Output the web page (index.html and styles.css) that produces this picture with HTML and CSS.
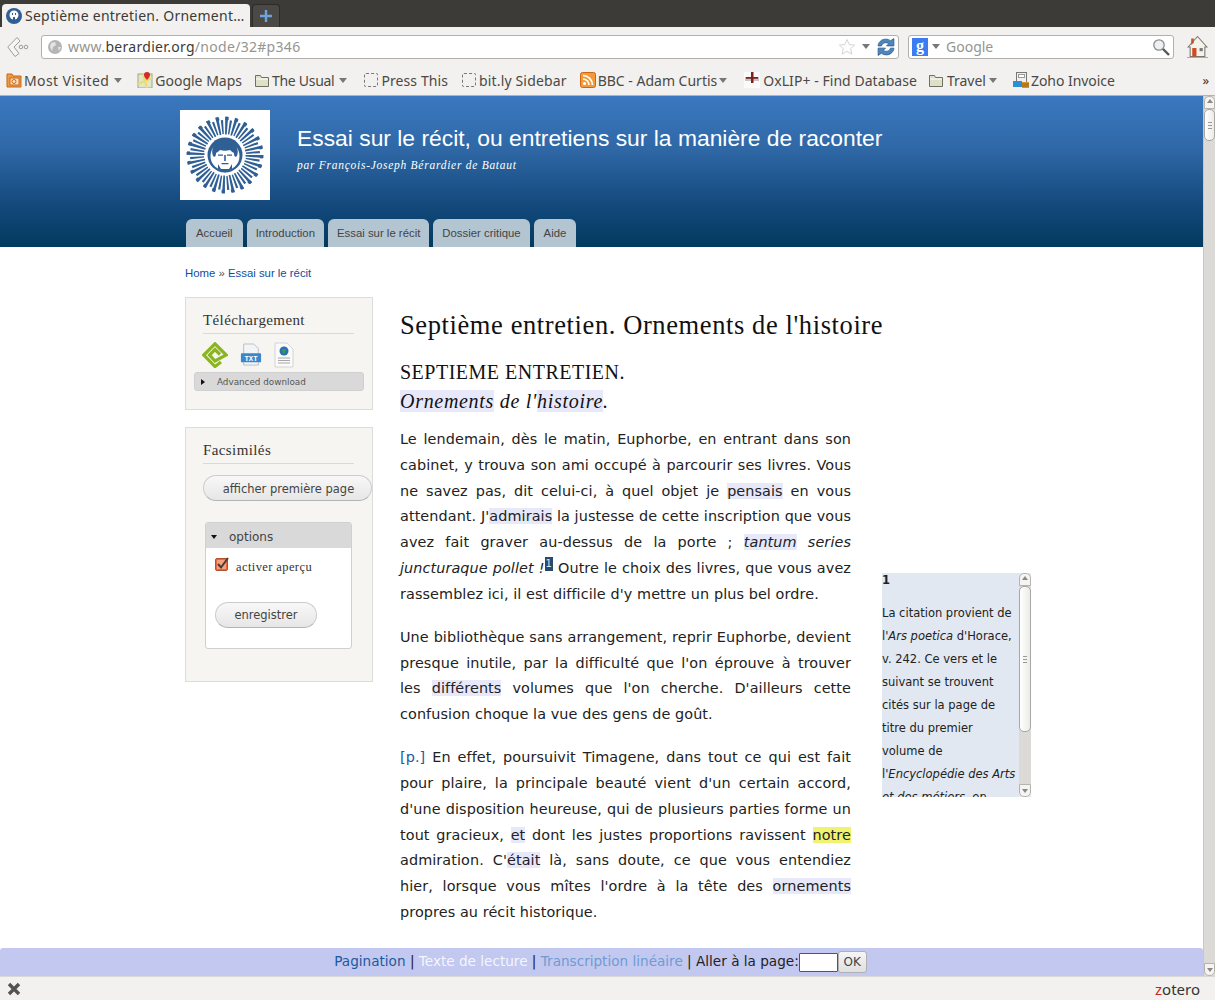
FILE: index.html
```html
<!DOCTYPE html>
<html lang="fr">
<head>
<meta charset="utf-8">
<title>Septième entretien. Ornements de l'histoire</title>
<link rel="stylesheet" href="styles.css">
</head>
<body>
<div class="window">
  <div class="tabbar">
    <div class="tab">
      <svg class="favicon" viewBox="0 0 16 16"><circle cx="8" cy="8" r="8" fill="#2f5f94"/><circle cx="8" cy="7" r="4.500" fill="#fff"/><path d="M6 5h1v2H6zM9 5h1v2H9zM7 9h2v5H7z" fill="#2f5f94"/></svg>
      <span class="tab-title">Septième entretien. Ornement…</span>
    </div>
    <div class="newtab"><svg viewBox="0 0 14 14" width="14" height="14"><path d="M7 1v12M1 7h12" stroke="#6ea3dc" stroke-width="2.400"/></svg></div>
  </div>
  <div class="navbar">
    <svg class="back" viewBox="0 0 22 20"><path d="M10 .5 .8 10 8 19.500 12 16.500 7 10 13 4z" fill="#f5f5f3" stroke="#9c9c9a"/><circle cx="14" cy="10" r="1.800" fill="none" stroke="#9c9c9a"/><circle cx="19" cy="10" r="1.800" fill="none" stroke="#9c9c9a"/></svg>
    <div class="urlbar">
      <svg class="globe" viewBox="0 0 16 16"><circle cx="8" cy="8" r="7" fill="#b5b5b5"/><path d="M4 4l4-1 1 3-3 2-1 4-2-4zM11 8l3 0-2 4z" fill="#e4e4e4"/></svg>
      <span class="url"><span class="url-dim">www.</span><span class="url-host">berardier.org</span><span class="url-dim">/node/32#p346</span></span>
      <svg class="star" viewBox="0 0 18 18"><path d="M9 1.500l2.300 5 5.400.6-4 3.600 1.100 5.400L9 13.400l-4.800 2.700 1.100-5.400-4-3.600 5.400-.6z" fill="#fdfdfd" stroke="#d5d5d5"/></svg>
      <span class="drop urlbar-drop"></span>
      <svg class="reload" viewBox="0 0 16 16"><path d="M1 7c0-3 3-6 6.500-6 2 0 3.500.6 4.500 1.500L15 .5V7H8.500l2-2C8 3.500 5 4 4 7z" fill="#4f87bd" stroke="#24598f" stroke-width=".7"/><path d="M15 9c0 3-3 6-6.500 6-2 0-3.500-.6-4.500-1.500L1 15.500V9h6.500l-2 2c2.500 1.500 5.500 1 6.500-2z" fill="#4f87bd" stroke="#24598f" stroke-width=".7"/></svg>
    </div>
    <div class="searchbar">
      <span class="g-icon">g</span>
      <span class="drop"></span>
      <span class="search-text">Google</span>
      <svg class="magnifier" viewBox="0 0 18 18"><circle cx="7" cy="7" r="5.200" fill="#eef1f4" stroke="#8b8b8b" stroke-width="1.300"/><path d="M11 11 17 17" stroke="#555" stroke-width="2.400"/></svg>
    </div>
    <svg class="home" viewBox="0 0 20 22"><path d="M10 1 1 11h2v9h14v-9h2z" fill="#f4f3ea" stroke="#77776f"/><path d="M4 3h2.500v4L4 9z" fill="#c8502a"/><path d="M5 12h4v8H5z" fill="#d1471f"/><path d="M12 12h3v3h-3z" fill="#777"/><path d="M0 21h20" stroke="#a9b47c"/></svg>
  </div>
  <div class="bookmarks">
    <span class="bm bm-mv"><svg class="bm-icon" viewBox="0 0 16 16"><path d="M1 2h5l1 2h8v11H1z" fill="#ef9c3f" stroke="#c8661d"/><rect x="4" y="6" width="9" height="7" fill="#fbe3c1" stroke="#c8661d"/><circle cx="8" cy="9.500" r="2" fill="none" stroke="#c8661d"/></svg>Most Visited<span class="drop"></span></span>
    <span class="bm bm-maps"><svg class="bm-icon" viewBox="0 0 16 16"><rect x="1" y="2" width="14" height="14" fill="#dce8c7" stroke="#9aa88c"/><path d="M1 12 15 6M6 2l4 14" stroke="#f3d86d" stroke-width="2"/><path d="M10 0a3 3 0 0 1 3 3c0 2-3 5-3 5S7 5 7 3a3 3 0 0 1 3-3z" fill="#d32a2a"/></svg>Google Maps</span>
    <span class="bm bm-usual"><svg class="bm-icon" viewBox="0 0 16 16"><path d="M1.500 3.500h5l1 2h7v9h-13z" fill="#dfe0c7" stroke="#707060"/><path d="M2 7h12" stroke="#fff"/></svg>The Usual<span class="drop"></span></span>
    <span class="bm bm-press"><span class="blank-icon"></span>Press This</span>
    <span class="bm bm-bitly"><span class="blank-icon"></span>bit.ly Sidebar</span>
    <span class="bm bm-bbc"><svg class="bm-icon" viewBox="0 0 16 16"><rect x=".5" y=".5" width="15" height="15" rx="2" fill="#f49a36" stroke="#c9671a"/><circle cx="4.500" cy="11.500" r="1.600" fill="#fff"/><path d="M3 7a6 6 0 0 1 6 6M3 3.500A9.500 9.500 0 0 1 12.500 13" fill="none" stroke="#fff" stroke-width="1.700"/></svg>BBC - Adam Curtis<span class="drop"></span></span>
    <span class="bm bm-oxlip"><svg class="bm-icon" viewBox="0 0 16 16"><rect width="16" height="16" fill="#fbfbfb"/><rect x="1" y="5" width="14" height="4" fill="#c9c2c2"/><path d="M7 0h2.500v11H7zM2 5h12v1.800H2z" fill="#7d2020"/></svg>OxLIP+ - Find Database</span>
    <span class="bm bm-travel"><svg class="bm-icon" viewBox="0 0 16 16"><path d="M1.500 3.500h5l1 2h7v9h-13z" fill="#dfe0c7" stroke="#707060"/><path d="M2 7h12" stroke="#fff"/></svg>Travel<span class="drop"></span></span>
    <span class="bm bm-zoho"><svg class="bm-icon" viewBox="0 0 16 16"><rect x="3.500" y=".5" width="10" height="12" fill="#eef0f2" stroke="#777"/><rect x="5.500" y="2.500" width="6" height="3" fill="#fff" stroke="#999"/><rect y="9" width="9" height="6" fill="#2d8fd6"/><rect x="9" y="10" width="7" height="6" fill="#d9932c"/><path d="M9 12h7M9 14h7" stroke="#6e4a10" stroke-width=".7"/></svg>Zoho Invoice</span>
    <span class="bm-more">»</span>
  </div>

  <div class="viewport">
    <div class="page">
      <header class="site-header">
        <div class="header-inner">
          <div class="brand">
            <div class="logo">
              <svg viewBox="0 0 90 90" width="90" height="90">
                <circle cx="45" cy="45" r="29.500" fill="none" stroke="#2f5f94" stroke-width="18" stroke-dasharray="2.300 5.420"/>
                <circle cx="45" cy="45" r="28" fill="none" stroke="#2f5f94" stroke-width="14" stroke-dasharray="1.800 5.530" stroke-dashoffset="3.600"/>
                <circle cx="45" cy="45" r="36.500" fill="none" stroke="#2f5f94" stroke-width="3" stroke-dasharray="3.400 6.160"/>
                <circle cx="45" cy="45" r="19.500" fill="#fff"/>
                <circle cx="45" cy="45" r="17.500" fill="#2f5f94"/>
                <circle cx="45" cy="46" r="14.500" fill="#fff"/>
                <path d="M33 46c-3-8 3-14 7-14 3-3 7-3 10 0 4 0 10 6 7 14-2 2-3 0-3-3-2-1-3-2-4-3-3 1-7 1-10 0-1 1-2 2-4 3 0 3-1 5-3 3z" fill="#2f5f94"/>
                <path d="M38 44.500h5v1.300h-5zM47 44.500h5v1.300h-5zM44.200 45h1.600v6h-1.600zM41.500 53h7v1.300h-7zM38 54l3 5h8l3-5 0 5-7 3.500-7-3.500z" fill="#2f5f94"/>
              </svg>
            </div>
            <div class="brand-text">
              <div class="site-name">Essai sur le récit, ou entretiens sur la manière de raconter</div>
              <div class="site-author">par François-Joseph Bérardier de Bataut</div>
            </div>
          </div>
          <nav class="tabs">
            <a class="nav-tab nav-tab-roomy">Accueil</a>
            <a class="nav-tab">Introduction</a>
            <a class="nav-tab">Essai sur le récit</a>
            <a class="nav-tab">Dossier critique</a>
            <a class="nav-tab nav-tab-roomy">Aide</a>
          </nav>
        </div>
      </header>
      <div class="content">
        <div class="crumbs"><a>Home</a> <span class="crumb-sep">»</span> <a>Essai sur le récit</a></div>
        <div class="columns">
          <aside class="sidebar">
            <section class="block block-dl">
              <h3 class="block-title">Téléchargement</h3>
              <div class="dl-icons">
                <svg class="dl-epub" viewBox="0 0 26 26"><path d="M19 20 13 24.500 1.800 13 13 1.800 24.200 13 13 19 7.500 13 13 7.500 18 12.500" fill="none" stroke="#8ab521" stroke-width="3.200"/></svg>
                <svg class="dl-txt" viewBox="0 0 24 26"><path d="M4 1h11l5 5v18H4z" fill="#f3f4f6" stroke="#b7bcc4"/><rect x="1" y="11" width="22" height="10" rx="1" fill="#3a87cc"/><text x="12" y="19.500" class="dl-txt-label">TXT</text></svg>
                <svg class="dl-web" viewBox="0 0 20 26"><path d="M1 1h12l6 6v18H1z" fill="#fafafa" stroke="#d4d4d4"/><circle cx="10" cy="9" r="4.500" fill="#2b6fb0"/><path d="M8 7l4 0-1 4-2 1z" fill="#3b9a4a"/><path d="M4 16h12M4 18.500h12M4 21h12" stroke="#a8a8a8" stroke-width="1.200"/></svg>
              </div>
              <div class="adv-download"><span class="arrow-right"></span><span>Advanced download</span></div>
            </section>
            <section class="block block-fac">
              <h3 class="block-title">Facsimilés</h3>
              <button class="pill pill-wide">afficher première page</button>
              <div class="options">
                <div class="options-head"><span class="arrow-down"></span><span>options</span></div>
                <div class="options-body">
                  <div class="check-row">
                    <svg class="checkbox" viewBox="0 0 15 15"><rect x=".5" y="1.500" width="12" height="12" rx="1.500" fill="#e8693f" stroke="#b7502c"/><rect x="2" y="3" width="9" height="9" fill="#f2a27e"/><path d="M3 7l3 3.500L13 1" fill="none" stroke="#4a3a32" stroke-width="2"/></svg>
                    <span class="check-label">activer aperçu</span>
                  </div>
                  <button class="pill pill-save">enregistrer</button>
                </div>
              </div>
            </section>
          </aside>
          <main class="article">
            <h1 class="title">Septième entretien. Ornements de l'histoire</h1>
            <h2 class="chapter">SEPTIEME ENTRETIEN.<br><em class="chapter-sub"><mark class="hl">Ornements</mark> de l'<mark class="hl">histoire</mark>.</em></h2>
            <div class="body-row">
              <div class="text">
                <p>Le lendemain, dès le matin, Euphorbe, en entrant dans son cabinet, y trouva son ami occupé à parcourir ses livres. Vous ne savez pas, dit celui-ci, à quel objet je <mark class="hl">pensais</mark> en vous attendant. J'<mark class="hl">admirais</mark> la justesse de cette inscription que vous avez fait graver au-dessus de la porte ; <em><mark class="hl">tantum</mark> series juncturaque pollet !</em><sup class="noteref">1</sup> Outre le choix des livres, que vous avez rassemblez ici, il est difficile d'y mettre un plus bel ordre.</p>
                <p>Une bibliothèque sans arrangement, reprir Euphorbe, devient presque inutile, par la difficulté que l'on éprouve à trouver les <mark class="hl">différents</mark> volumes que l'on cherche. D'ailleurs cette confusion choque la vue des gens de goût.</p>
                <p><a class="pageref">[p.]</a> En effet, poursuivit Timagene, dans tout ce qui est fait pour plaire, la principale beauté vient d'un certain accord, d'une disposition heureuse, qui de plusieurs parties forme un tout gracieux, <mark class="hl">et</mark> dont les justes proportions ravissent <mark class="hl-yellow">notre</mark> admiration. C'<mark class="hl">était</mark> là, sans doute, ce que vous entendiez hier, lorsque vous mîtes l'ordre à la tête des <mark class="hl">ornements</mark> propres au récit historique.</p>
              </div>
              <aside class="note">
                <div class="note-text">
                  <strong>1</strong>
                  <p>La citation provient de l'<em>Ars poetica</em> d'Horace, v. 242. Ce vers et le suivant se trouvent cités sur la page de titre du premier volume de l'<em>Encyclopédie des Arts et des métiers</em>, en</p>
                </div>
                <div class="note-scroll">
                  <span class="sb-up"></span>
                  <div class="sb-track"><div class="note-thumb"><i></i></div></div>
                  <span class="sb-down"></span>
                </div>
              </aside>
            </div>
          </main>
        </div>
      </div>
      <div class="pager">
        <a class="pg-dark">Pagination</a> | <a class="pg-white">Texte de lecture</a> | <a class="pg-light">Transcription linéaire</a> | Aller à la page:<input class="pg-input" type="text"><button class="pg-ok">OK</button>
      </div>
    </div>
    <div class="scrollbar">
      <span class="sb-up"></span>
      <div class="sb-track"><div class="page-thumb"><i></i></div></div>
      <span class="sb-down"></span>
    </div>
  </div>

  <div class="statusbar">
    <svg class="close-x" viewBox="0 0 14 14"><path d="M2 2l10 10M12 2 2 12" stroke="#55534e" stroke-width="3.400"/></svg>
    <span class="zotero"><span class="z-red">z</span>otero</span>
  </div>
</div>
</body>
</html>
```

FILE: styles.css
```css
* { box-sizing: border-box; }
html, body { margin: 0; height: 100%; overflow: hidden; }
body { font-family: "DejaVu Sans", sans-serif; color: #222; background: #fff; }
.window { height: 1000px; display: flex; flex-direction: column; }

/* browser chrome */
.tabbar { height: 27px; background: #3c3b37; display: flex; align-items: flex-end; padding-left: 2px; gap: 2px; flex: none; }
.tab { width: 248px; height: 23px; background: #f2f1ef; border-radius: 4px 4px 0 0; display: flex; align-items: center; padding-left: 4px; gap: 3px; font: 14px "Noto Sans", sans-serif; color: #3c3b37; white-space: nowrap; overflow: hidden; }
.favicon { width: 16px; height: 16px; flex: none; }
.tab-title { letter-spacing: .26px; }
.newtab { width: 28px; height: 23px; background: #4a4945; border: 1px solid #2c2b28; border-bottom: 0; border-radius: 4px 4px 0 0; display: flex; align-items: center; justify-content: center; }
.navbar { height: 38px; background: #f2f1ef; display: flex; align-items: center; flex: none; padding: 1px 6px 0 7px; font: 14px "Noto Sans", sans-serif; }
.back { width: 22px; height: 20px; flex: none; margin-right: 12px; }
.urlbar { width: 858px; height: 24px; background: #fff; border: 1px solid #b2b0aa; border-radius: 3px; display: flex; align-items: center; padding: 0 3px 0 5px; }
.globe { width: 16px; height: 16px; margin-right: 5px; flex: none; }
.url { flex: 1; white-space: nowrap; letter-spacing: .3px; }
.url-dim { color: #96958f; }
.url-host { color: #3c3b37; }
.star { width: 18px; height: 18px; flex: none; margin-right: 2px; }
.urlbar-drop { margin: 0 7px 0 0; }
.reload { width: 18px; height: 18px; flex: none; }
.drop { display: inline-block; width: 0; height: 0; border: 4px solid transparent; border-top: 5px solid #777; border-bottom: 0; margin-left: 4px; vertical-align: middle; flex: none; }
.searchbar { width: 266px; height: 24px; margin-left: 9px; background: #fff; border: 1px solid #b2b0aa; border-radius: 3px; display: flex; align-items: center; padding: 0 3px 0 3px; }
.g-icon { width: 16px; height: 18px; background: #3d7cf0; color: #fff; font: 700 16px/15px "Liberation Serif", serif; text-align: center; flex: none; }
.search-text { flex: 1; color: #96958f; margin-left: 6px; }
.magnifier { width: 18px; height: 18px; flex: none; }
.home { width: 21px; height: 24px; margin-left: 13px; flex: none; }
.bookmarks { height: 31px; background: #f2f1ef; border-bottom: 1px solid #b5b3ae; display: flex; align-items: center; padding: 0 6px; font: 14px "Noto Sans", sans-serif; color: #4a4945; white-space: nowrap; flex: none; }
.bm { display: inline-flex; align-items: center; }
.bm-icon { width: 16px; height: 16px; margin-right: 2px; flex: none; }
.bm .drop { margin-left: 5px; }
.bm-mv { margin-right: 15px; letter-spacing: .4px; }
.bm-maps { margin-right: 12px; }
.bm-usual { margin-right: 17px; letter-spacing: -.3px; }
.bm-press { margin-right: 14px; letter-spacing: .1px; }
.bm-bitly { margin-right: 13px; letter-spacing: .15px; }
.bm-bbc { margin-right: 17px; }
.bm-bbc .drop { margin-left: 2px; }
.bm-oxlip { margin-right: 11px; letter-spacing: .05px; }
.bm-oxlip .bm-icon { margin-right: 3px; }
.bm-travel { margin-right: 16px; }
.bm-travel .bm-icon { margin-right: 3px; }
.bm-travel .drop { margin-left: 3px; }
.bm-zoho { letter-spacing: -.05px; }
.blank-icon { width: 14px; height: 14px; border: 1px dashed #777; border-radius: 2px; margin-right: 3px; flex: none; }
.bm-more { margin-left: auto; font-size: 13px; color: #333; }

/* viewport */
.viewport { flex: 1; min-height: 0; display: flex; }
.page { flex: 1; min-width: 0; position: relative; overflow: hidden; background: #fff; }
.scrollbar { width: 12px; background: #dcdad6; border-left: 1px solid #c9c7c3; display: flex; flex-direction: column; flex: none; }
.sb-up, .sb-down { height: 13px; background: #f5f4f2; flex: none; position: relative; border: 1px solid #b5b3ae; }
.sb-up { border-radius: 5px 5px 0 0; }
.sb-down { border-radius: 0 0 5px 5px; }
.sb-up::after, .sb-down::after { content: ""; position: absolute; left: 2px; width: 0; height: 0; border: 3px solid transparent; }
.sb-up::after { top: 2px; border-top: 0; border-bottom: 4px solid #888; }
.sb-down::after { top: 4px; border-bottom: 0; border-top: 4px solid #888; }
.sb-track { flex: 1; min-height: 0; background: #dcdad6; }
.page-thumb { height: 32px; background: linear-gradient(90deg, #fff, #ecebe8); border: 1px solid #a9a7a2; border-radius: 5px; display: flex; align-items: center; justify-content: center; }
.note-thumb { height: 146px; background: linear-gradient(90deg, #fff, #ecebe8); border: 1px solid #a9a7a2; border-radius: 5px; display: flex; align-items: center; justify-content: center; }
.page-thumb i, .note-thumb i { width: 4px; height: 7px; background: repeating-linear-gradient(#999 0 1px, transparent 1px 3px); }
.statusbar { height: 24px; background: #f2f1ef; border-top: 1px solid #dad9d6; display: flex; align-items: center; justify-content: space-between; padding: 0 15px 0 7px; flex: none; }
.close-x { width: 14px; height: 14px; }
.zotero { font: 15px "Noto Sans", sans-serif; color: #333; }
.z-red { color: #c22; }

/* site header */
.site-header { height: 151px; background: linear-gradient(#3a78c0, #2f68a6 35%, #14497d 72%, #023a5e); }
.header-inner { height: 100%; padding: 14px 0 0 180px; display: flex; flex-direction: column; }
.brand { display: flex; }
.logo { width: 90px; height: 90px; background: #fff; }
.brand-text { margin-left: 27px; padding-top: 14px; color: #fff; }
.site-name { font: 22.850px/28px "Liberation Sans", sans-serif; }
.site-author { font: italic 11.500px/18px "Liberation Serif", serif; margin-top: 4px; letter-spacing: .73px; }
.tabs { display: flex; gap: 4px; margin-top: auto; padding-left: 6px; }
.nav-tab { height: 28px; background: #b4c5d2; border-radius: 6px 6px 0 0; padding: 0 9px; font: 11.360px/28px "Liberation Sans", sans-serif; color: #444; }
.nav-tab-roomy { padding: 0 10px; }

/* content */
.content { padding: 18px 0 0 185px; }
.crumbs { font: 11.360px/16px "Liberation Sans", sans-serif; color: #555; }
.crumbs a { color: #0d4f9e; }
.crumb-sep { color: #555; }
.columns { display: flex; margin-top: 16px; }
.sidebar { width: 188px; flex: none; }
.block { background: #f6f5f1; border: 1px solid #dcdcdc; padding: 12px 0 0 17px; }
.block-dl { height: 113px; margin-bottom: 17px; }
.block-fac { height: 255px; }
.block-title { width: 151px; margin: 0; padding-bottom: 3px; border-bottom: 1px solid #d9d9d9; font: 400 15px/20px "Liberation Serif", serif; color: #333; letter-spacing: .4px; }
.dl-icons { display: flex; align-items: center; gap: 12px; margin-top: 8px; height: 26px; }
.dl-epub { width: 26px; height: 26px; margin-left: -1px; }
.dl-txt { width: 22px; height: 24px; }
.dl-web { width: 20px; height: 26px; }
.dl-txt-label { font: 700 8px "Liberation Mono", monospace; fill: #fff; text-anchor: middle; }
.adv-download { width: 170px; height: 19px; margin: 4px 0 0 -9px; background: #d9d9d9; border: 1px solid #d0d0d0; border-radius: 3px; font-size: 8.800px; line-height: 18px; color: #555; display: flex; align-items: center; padding: 1px 0 0 6px; gap: 12px; }
.arrow-right { width: 0; height: 0; border: 3.500px solid transparent; border-left: 4px solid #111; border-right: 0; }
.arrow-down { width: 0; height: 0; border: 3.500px solid transparent; border-top: 4px solid #111; border-bottom: 0; }
.pill { display: block; font: 11.500px "DejaVu Sans", sans-serif; color: #444; border: 1px solid #ccc; border-bottom-color: #b5b5b5; border-radius: 13px; background: linear-gradient(#f8f8f8, #e6e6e6); padding: 0; }
.pill-wide { width: 169px; height: 26px; margin-top: 11px; padding: 1px 0 0 2px; }
.options { width: 147px; height: 127px; margin: 21px 0 0 2px; background: #fff; border: 1px solid #d0d0d0; border-radius: 3px; overflow: hidden; }
.options-head { height: 25px; background: #d9d9d9; display: flex; align-items: center; padding: 2px 0 0 5px; gap: 12px; font-size: 12px; color: #444; }
.options-body { padding: 8px 0 0 9px; }
.check-row { display: flex; align-items: center; height: 20px; gap: 6px; }
.checkbox { width: 15px; height: 15px; margin-top: -4px; }
.check-label { font: 12.500px "Liberation Serif", serif; color: #333; letter-spacing: .4px; margin-top: 2px; }
.pill-save { width: 102px; height: 26px; margin-top: 26px; }

/* article */
.article { width: 640px; margin-left: 27px; flex: none; }
.title { margin: 11px 0 0; font: 400 26.500px/34px "Liberation Serif", serif; color: #111; white-space: nowrap; letter-spacing: .6px; }
.chapter { margin: 16px 0 0; font: 400 20px/29px "Liberation Serif", serif; color: #111; letter-spacing: .5px; }
.chapter-sub { letter-spacing: .7px; }
.hl { background: #e8e8fb; color: inherit; }
.hl-yellow { background: #f1f26f; color: inherit; }
.body-row { display: flex; align-items: flex-start; margin-top: 11px; }
.text { width: 451px; flex: none; font-size: 14.400px; line-height: 25.750px; text-align: justify; color: #222; letter-spacing: .09px; }
.text p { margin: 0 0 17.500px; }
.noteref { display: inline-block; height: 14px; background: #2a4a6c; color: #dfe6ee; font-size: 10px; line-height: 14px; padding: 0 1px; vertical-align: 6px; font-style: normal; }
.pageref { color: #1a5a9e; }
.note { width: 149px; height: 224px; margin: 146px 0 0 31px; background: #e1e8f1; display: flex; flex: none; overflow: hidden; }
.note-text { width: 137px; flex: none; padding-right: 3px; font-size: 11.500px; line-height: 23px; color: #222; overflow: hidden; }
.note-text strong { display: block; line-height: 14px; }
.note-text p { margin: 15px 0 0; }
.note-scroll { width: 12px; display: flex; flex-direction: column; flex: none; }

/* bottom pager */
.pager { position: absolute; left: 0; right: 0; bottom: 0; height: 28px; padding-right: 2px; background: #c2c8f0; text-align: center; font-size: 13.600px; line-height: 26px; color: #222; border-radius: 3px 3px 0 0; white-space: nowrap; }
.pg-dark { color: #1a5a9e; }
.pg-white { color: #f4f6fc; }
.pg-light { color: #6f9bd0; }
.pg-input { width: 39px; height: 19px; border: 1px solid #2f5f82; background: #fff; padding: 0; vertical-align: middle; border-radius: 1px; }
.pg-ok { width: 29px; height: 22px; font: 12px "DejaVu Sans", sans-serif; color: #444; background: linear-gradient(#f5f5f5, #e0e0e0); border: 1px solid #b0b0b0; border-radius: 3px; padding: 0; vertical-align: middle; }
```
